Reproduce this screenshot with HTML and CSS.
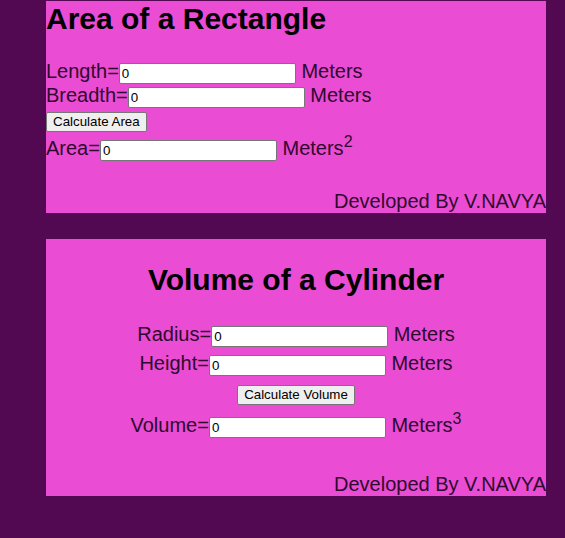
FILE: index.html
```html
<!DOCTYPE html>
<html>
<head>
<meta charset="utf-8">
<link rel="stylesheet" href="styles.css">
</head>
<body>
<div class="page">
  <section class="card card-area">
    <h1 class="title">Area of a Rectangle</h1>
    <div class="row row-first">Length=<input class="field" type="text" value="0"> Meters</div>
    <div class="row">Breadth=<input class="field" type="text" value="0"> Meters</div>
    <div class="row row-btn"><button class="btn">Calculate Area</button></div>
    <div class="row">Area=<input class="field" type="text" value="0"> Meters<sup>2</sup></div>
    <div class="credit credit-area">Developed By V.NAVYA</div>
  </section>
  <section class="card card-volume">
    <h1 class="title title-center">Volume of a Cylinder</h1>
    <div class="row row-c row-first-c">Radius=<input class="field" type="text" value="0"> Meters</div>
    <div class="row row-c">Height=<input class="field" type="text" value="0"> Meters</div>
    <div class="row row-c row-btn-c"><button class="btn">Calculate Volume</button></div>
    <div class="row row-c">Volume=<input class="field" type="text" value="0"> Meters<sup>3</sup></div>
    <div class="credit credit-volume">Developed By V.NAVYA</div>
  </section>
</div>
</body>
</html>
```
FILE: styles.css
```css
html, body {
  margin: 0;
  padding: 0;
  background: #520952;
}
.page {
  padding: 1px 0 43px 46px;
  font-family: "Liberation Sans", Arial, sans-serif;
  color: #2e0a2e;
}
.card {
  width: 500px;
  background: #ea4cd4;
}
.card-volume {
  margin-top: 26px;
  text-align: center;
  padding-top: 23px;
}
.title {
  margin: 0;
  font-size: 30px;
  line-height: 35px;
  font-weight: bold;
  color: #000;
}
.row {
  font-size: 20px;
  line-height: 23px;
  height: 24px;
}
.row-first {
  margin-top: 24px;
}
.row-btn {
  height: 28px;
  line-height: 20px;
  padding-top: 1px;
}
.row-c {
  height: 29px;
}
.row-first-c {
  margin-top: 26px;
}
.row-btn-c {
  height: 32px;
  line-height: 20px;
  padding-top: 1px;
}
.field {
  box-sizing: border-box;
  width: 177px;
  height: 21px;
  padding: 1px 2px;
  border: 1px solid #767676;
  border-radius: 2px;
  background: #fff;
  font-family: "Liberation Sans", Arial, sans-serif;
  font-size: 13.333px;
  color: #000;
  vertical-align: baseline;
}
.btn {
  box-sizing: border-box;
  height: 20px;
  padding: 0 6px;
  border: 1px solid #767676;
  border-radius: 2px;
  background: #efefef;
  font-family: "Liberation Sans", Arial, sans-serif;
  font-size: 13.333px;
  color: #000;
  line-height: 16px;
}
sup {
  font-size: 16px;
  line-height: 0;
}
.credit {
  font-size: 20px;
  line-height: 23px;
  text-align: right;
}
.credit-area {
  margin-top: 29px;
}
.credit-volume {
  margin-top: 30px;
}
```
